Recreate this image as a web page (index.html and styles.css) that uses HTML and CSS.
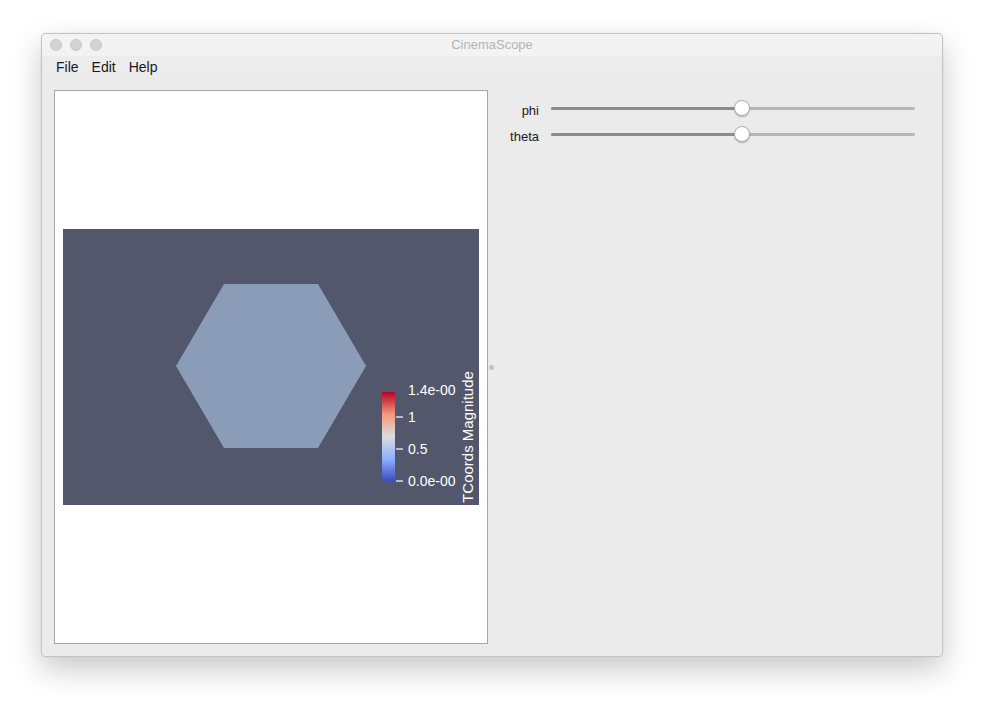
FILE: index.html
```html
<!DOCTYPE html>
<html>
<head>
<meta charset="utf-8">
<title>CinemaScope</title>
<link rel="stylesheet" href="styles.css">
</head>
<body>
<div class="window">
  <div class="titlebar">
    <div class="lights"><span class="light"></span><span class="light"></span><span class="light"></span></div>
    <div class="title">CinemaScope</div>
  </div>
  <div class="menubar">
    <span class="menu">File</span>
    <span class="menu">Edit</span>
    <span class="menu">Help</span>
  </div>
  <div class="content">
    <div class="viewer">
      <svg class="render" width="416" height="276" viewBox="0 0 416 276">
        <defs>
          <linearGradient id="cw" x1="0" y1="1" x2="0" y2="0">
            <stop offset="0" stop-color="#3b4cc0"/>
            <stop offset="0.25" stop-color="#8db0fe"/>
            <stop offset="0.5" stop-color="#dddcdc"/>
            <stop offset="0.75" stop-color="#f4987a"/>
            <stop offset="1" stop-color="#b40426"/>
          </linearGradient>
        </defs>
        <rect x="0" y="0" width="416" height="276" fill="#52576c"/>
        <polygon points="113,137 161,55 255,55 303,137 255,219 161,219" fill="#8a9cb8"/>
        <rect x="319" y="163" width="13" height="89" fill="url(#cw)"/>
        <g stroke="#ffffff" stroke-width="1.2">
          <line x1="333" y1="188" x2="340" y2="188"/>
          <line x1="333" y1="220" x2="340" y2="220"/>
          <line x1="333" y1="252" x2="340" y2="252"/>
        </g>
        <g class="cbl" fill="#ffffff">
          <text x="345" y="166">1.4e-00</text>
          <text x="345" y="193">1</text>
          <text x="345" y="225">0.5</text>
          <text x="345" y="257">0.0e-00</text>
          <text x="0" y="0" text-anchor="middle" class="vt" transform="translate(410,208) rotate(-90)">TCoords Magnitude</text>
        </g>
      </svg>
    </div>
    <div class="splitter"><span class="grip"></span></div>
    <div class="controls">
      <div class="row">
        <span class="label">phi</span>
        <div class="slider"><div class="fill" style="width:52.5%"></div><span class="thumb" style="left:52.5%"></span></div>
      </div>
      <div class="row">
        <span class="label">theta</span>
        <div class="slider"><div class="fill" style="width:52.5%"></div><span class="thumb" style="left:52.5%"></span></div>
      </div>
    </div>
  </div>
</div>
</body>
</html>
```

FILE: styles.css
```css
html, body {
  margin: 0;
  padding: 0;
  background: #ffffff;
}
body {
  font-family: "Liberation Sans", Arial, sans-serif;
  width: 984px;
  height: 706px;
  overflow: hidden;
}
.window {
  margin: 33px 0 0 41px;
  width: 900px;
  height: 622px;
  border: 1px solid #c4c4c4;
  border-radius: 5px;
  background: #ebebeb;
  box-shadow: 0 12px 30px rgba(0,0,0,0.22), 0 0 1px rgba(0,0,0,0.2);
  display: flex;
  flex-direction: column;
  overflow: hidden;
}
.titlebar {
  height: 22px;
  background: #f3f3f3;
  display: flex;
  align-items: center;
  position: relative;
}
.lights {
  display: flex;
  gap: 8px;
  padding-left: 8px;
}
.light {
  width: 12px;
  height: 12px;
  border-radius: 50%;
  background: #d3d3d3;
  border: 0.5px solid #c8c8c8;
  box-sizing: border-box;
}
.title {
  position: absolute;
  left: 0;
  right: 0;
  top: 0;
  line-height: 22px;
  text-align: center;
  font-size: 13px;
  color: #b3b3b3;
}
.menubar {
  height: 22px;
  display: flex;
  align-items: center;
  padding-left: 14px;
  font-size: 14px;
  color: #1a1a1a;
  background: #ececec;
}
.menu {
  margin-right: 13px;
}
.content {
  flex: 1;
  display: flex;
  padding: 12px 12px 12px 12px;
  background: #ebebeb;
}
.viewer {
  width: 432px;
  height: 552px;
  background: #ffffff;
  border: 1px solid #a6a6a6;
  display: flex;
  align-items: center;
  justify-content: center;
}
.render {
  display: block;
}
.cbl text {
  font-family: "Liberation Sans", Arial, sans-serif;
  font-size: 14px;
}
.cbl text.vt {
  font-size: 15px;
}
.splitter {
  width: 6px;
  display: flex;
  align-items: center;
  justify-content: center;
}
.grip {
  width: 5px;
  height: 5px;
  border-radius: 50%;
  background: #c3c3c3;
}
.controls {
  flex: 1;
  padding: 5px 15px 0 0;
  display: flex;
  flex-direction: column;
}
.row {
  display: flex;
  align-items: center;
  height: 26px;
}
.label {
  width: 45px;
  text-align: right;
  font-size: 13px;
  color: #1a1a1a;
  margin-right: 12px;
  padding-top: 4px;
}
.slider {
  flex: 1;
  height: 3px;
  background: #b6b6b6;
  border-radius: 2px;
  position: relative;
}
.fill {
  height: 100%;
  background: #8c8c8c;
  border-radius: 2px;
}
.thumb {
  position: absolute;
  top: 50%;
  width: 16px;
  height: 16px;
  margin: -8px 0 0 -8px;
  border-radius: 50%;
  background: #ffffff;
  border: 0.5px solid #b0b0b0;
  box-shadow: 0 1px 1.5px rgba(0,0,0,0.25);
  box-sizing: border-box;
}
```
